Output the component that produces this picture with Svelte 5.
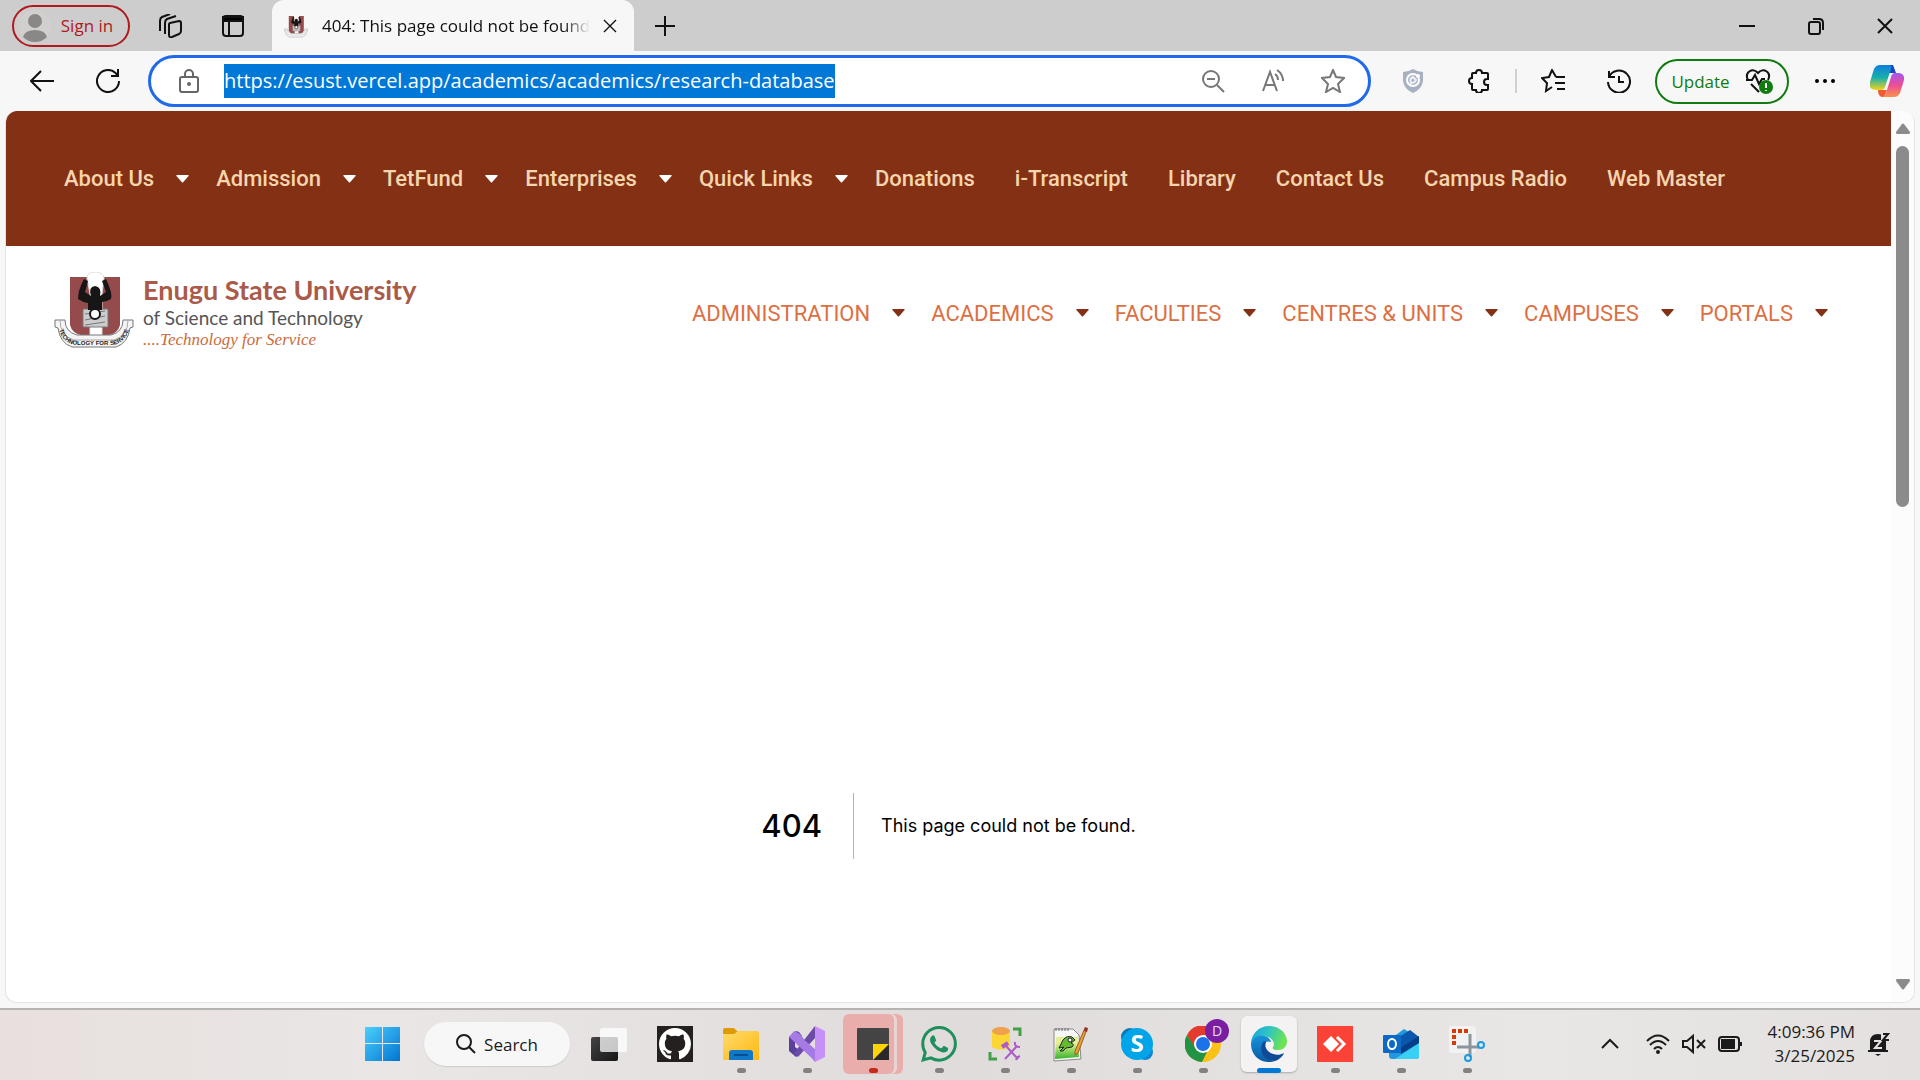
<script lang="ts">
	import { onMount } from 'svelte';

	interface NavItem {
		label: string;
		menu?: boolean;
	}

	interface TaskbarApp {
		id: string;
		name: string;
		state?: 'running' | 'alert' | 'active';
	}

	const topLinks: NavItem[] = [
		{ label: 'About Us', menu: true },
		{ label: 'Admission', menu: true },
		{ label: 'TetFund', menu: true },
		{ label: 'Enterprises', menu: true },
		{ label: 'Quick Links', menu: true },
		{ label: 'Donations' },
		{ label: 'i-Transcript' },
		{ label: 'Library' },
		{ label: 'Contact Us' },
		{ label: 'Campus Radio' },
		{ label: 'Web Master' }
	];

	const mainLinks: NavItem[] = [
		{ label: 'ADMINISTRATION', menu: true },
		{ label: 'ACADEMICS', menu: true },
		{ label: 'FACULTIES', menu: true },
		{ label: 'CENTRES & UNITS', menu: true },
		{ label: 'CAMPUSES', menu: true },
		{ label: 'PORTALS', menu: true }
	];

	const apps: TaskbarApp[] = [
		{ id: 'taskview', name: 'Task view' },
		{ id: 'github', name: 'GitHub' },
		{ id: 'explorer', name: 'File Explorer', state: 'running' },
		{ id: 'vs', name: 'Visual Studio', state: 'running' },
		{ id: 'notes', name: 'Sticky Notes', state: 'alert' },
		{ id: 'whatsapp', name: 'WhatsApp', state: 'running' },
		{ id: 'ssms', name: 'SQL Server Management Studio', state: 'running' },
		{ id: 'notepad', name: 'Notepad++', state: 'running' },
		{ id: 'skype', name: 'Skype', state: 'running' },
		{ id: 'chrome', name: 'Chrome', state: 'running' },
		{ id: 'edge', name: 'Edge', state: 'active' },
		{ id: 'anydesk', name: 'AnyDesk', state: 'running' },
		{ id: 'outlook', name: 'Outlook', state: 'running' },
		{ id: 'snip', name: 'Snipping Tool', state: 'running' }
	];

	let url = $state('https://esust.vercel.app/academics/academics/research-database');
	let address: HTMLInputElement;

	onMount(() => {
		address.focus();
		address.select();
	});
</script>

{#snippet crest(motto: boolean)}
	<svg class="crest" viewBox="0 0 80 76" aria-hidden="true">
		<path d="M16 5h50v48q-2 8-11 10H27q-9-2-11-10z" fill="#954a4b" />
		<path d="M33 6q0-6 8-6t9 6l-2 16v42H36V22z" fill="#fff" stroke="#ddd" />
		<path d="M29 37h25v18H29z" fill="#ccc" stroke="#777" />
		<path d="M31 42l20-3M31 48l20-4M31 53l20-3" stroke="#777" fill="none" />
		<path
			d="M30 7l4 2-3 11 6 4q-3-9 4-10 7 1 5 10l6-4-4-11 4-2q7 15 5 20-5 3-9 3v8H34v-7q-6-1-10-4 0-9 6-20z"
			fill="#171515"
		/>
		<circle cx="41" cy="42" r="5" fill="#fff" stroke="#171515" stroke-width="2" />
		<path
			d="M1 48h10q0 12 12 15h34q12-3 12-15h10v7l-3 1q-2 15-14 19H18Q6 71 4 56l-3-1z"
			fill="#f4f4f4"
			stroke="#777"
		/>
		<path d="M6 48q0 16 14 20h40q14-4 14-20" fill="none" stroke="#aaa" />
		{#if motto}
			<path id="motto-line" d="M5 57Q9 73 25 73h30q16 0 20-16" fill="none" />
			<text class="motto"><textPath href="#motto-line" startOffset="50%">TECHNOLOGY FOR SERVICE</textPath></text>
		{/if}
	</svg>
{/snippet}

{#snippet caret()}
	<svg class="caret" viewBox="0 0 13 8" aria-hidden="true"><path d="M1 0h11q1 0 .6 1L7.3 7q-.8 1-1.6 0L.4 1Q0 0 1 0z" /></svg>
{/snippet}

{#snippet appIcon(id: string)}
	<svg class="app-icon" viewBox="0 0 36 36" aria-hidden="true">
		{#if id === 'taskview'}
			<defs>
				<linearGradient id="tv" y2="1" x2="1"><stop stop-color="#444" /><stop offset="1" stop-color="#161616" /></linearGradient>
			</defs>
			<rect y="11" width="27" height="24" rx="2" fill="url(#tv)" />
			<rect x="9" y="2" width="27" height="24" rx="2" fill="#fff" opacity=".75" />
		{:else if id === 'github'}
			<rect width="36" height="36" fill="#24201f" />
			<path
				transform="translate(2 2) scale(2)"
				fill="#fff"
				d="M8 0C3.58 0 0 3.58 0 8c0 3.54 2.29 6.53 5.47 7.59.4.07.55-.17.55-.38 0-.19-.01-.82-.01-1.49-2.01.37-2.53-.49-2.69-.94-.09-.23-.48-.94-.82-1.13-.28-.15-.68-.52-.01-.53.63-.01 1.08.58 1.23.82.72 1.21 1.87.87 2.33.66.07-.52.28-.87.51-1.07-1.78-.2-3.64-.89-3.64-3.95 0-.87.31-1.59.82-2.15-.08-.2-.36-1.02.08-2.12 0 0 .67-.21 2.2.82.64-.18 1.32-.27 2-.27s1.36.09 2 .27c1.53-1.04 2.2-.82 2.2-.82.44 1.1.16 1.92.08 2.12.51.56.82 1.27.82 2.15 0 3.07-1.87 3.75-3.65 3.95.29.25.54.73.54 1.48 0 1.07-.01 1.93-.01 2.2 0 .21.15.46.55.38A8.01 8.01 0 0 0 16 8c0-4.42-3.58-8-8-8z"
			/>
		{:else if id === 'explorer'}
			<defs>
				<linearGradient id="fe" x2="1" y2="1"><stop stop-color="#ffdb6b" /><stop offset="1" stop-color="#fdb813" /></linearGradient>
			</defs>
			<path d="M0 4q0-2 2-2h9l4 4v4H0z" fill="#dd9c05" />
			<path d="M0 8h11l4-3h19q2 0 2 2v27H0z" fill="url(#fe)" />
			<path d="M6 34v-7q0-3 3-3h18q3 0 3 3v7z" fill="#0f78c8" />
			<path d="M11 29h14" stroke="#06508f" stroke-width="2" />
		{:else if id === 'vs'}
			<path d="M0 11l7-6 3 1 3 4-7 5v6l7 5-6 5-7-6z" fill="#59409a" />
			<path d="M6 5l5 3 17 22-2 6L6 10z" fill="#a177df" />
			<path d="M5 27L26 0v12L9 31z" fill="#6c4ba8" />
			<path d="M5 5l22 19v12L0 11z" fill="#a67ae4" />
			<path d="M26 0l10 5v26l-10 5z" fill="#c690f7" />
		{:else if id === 'notes'}
			<rect x="2" y="2" width="32" height="32" rx="1" fill="#444" />
			<path d="M18 34h16V18z" fill="#292929" />
			<path d="M18 18h16L18 34z" fill="#fdd20b" />
		{:else if id === 'whatsapp'}
			<path
				transform="scale(1.5)"
				fill="#1f8f5d"
				d="M17.472 14.382c-.297-.149-1.758-.867-2.03-.967-.273-.099-.471-.148-.67.15-.197.297-.767.966-.94 1.164-.173.199-.347.223-.644.075-.297-.15-1.255-.463-2.39-1.475-.883-.788-1.48-1.761-1.653-2.059-.173-.297-.018-.458.13-.606.134-.133.298-.347.446-.52.149-.174.198-.298.298-.497.099-.198.05-.371-.025-.52-.075-.149-.669-1.612-.916-2.207-.242-.579-.487-.5-.669-.51-.173-.008-.371-.01-.57-.01-.198 0-.52.074-.792.372-.272.297-1.04 1.016-1.04 2.479 0 1.462 1.065 2.875 1.213 3.074.149.198 2.096 3.2 5.077 4.487.709.306 1.262.489 1.694.625.712.227 1.36.195 1.871.118.571-.085 1.758-.719 2.006-1.413.248-.694.248-1.289.173-1.413-.074-.124-.272-.198-.57-.347m-5.421 7.403h-.004a9.87 9.87 0 01-5.031-1.378l-.361-.214-3.741.982.998-3.648-.235-.374a9.86 9.86 0 01-1.51-5.26c.001-5.45 4.436-9.884 9.888-9.884 2.64 0 5.122 1.03 6.988 2.898a9.825 9.825 0 012.893 6.994c-.003 5.45-4.437 9.884-9.885 9.884m8.413-18.297A11.815 11.815 0 0012.05 0C5.495 0 .16 5.335.157 11.892c0 2.096.547 4.142 1.588 5.945L.057 24l6.305-1.654a11.882 11.882 0 005.683 1.448h.005c6.554 0 11.89-5.335 11.893-11.893a11.821 11.821 0 00-3.48-8.413z"
			/>
		{:else if id === 'ssms'}
			<path d="M5 5v16q8 5 18 0V5z" fill="#fcd634" />
			<ellipse cx="14" cy="5" rx="9" ry="4" fill="#efa04c" />
			<path d="M26 3h7v7M3 26v7h7" fill="none" stroke="#43a047" stroke-width="3" />
			<path d="M18 19l13 14M30 20L18 33" stroke="#ab5cc9" stroke-width="2" />
			<path d="M15 21l6-4" stroke="#ab5cc9" stroke-width="4" />
			<path d="M28 16q-1 5 5 5M29 34q1-3 4-4" fill="none" stroke="#ab5cc9" stroke-width="2" />
		{:else if id === 'notepad'}
			<defs>
				<linearGradient id="np" x2="0" y2="1"><stop offset=".3" stop-color="#e4ef95" /><stop offset="1" stop-color="#35b52a" /></linearGradient>
			</defs>
			<path d="M1 3h19l6 6 2 24-27 2z" fill="#f7f7f7" stroke="#888" />
			<path d="M3 11h22l1 20-24 2z" fill="url(#np)" />
			<path d="M3 5v-3M6 5v-3M9 5v-3M12 5v-3M15 5v-3" stroke="#666" />
			<path d="M6 22l4-8q4-5 9-3l3 3-4 3q4 1 1 4l-6 1-3 3H7l4-4z" fill="#64bb32" stroke="#222" />
			<circle cx="17" cy="14" r="2" fill="#fff" stroke="#222" />
			<path d="M32 2l2 1-9 24-3 2v-4z" fill="#f0a02a" stroke="#946027" />
			<path d="M32 1l3 1-1 4-3-1z" fill="#9c2f2f" />
		{:else if id === 'skype'}
			<circle cx="11" cy="11" r="9" fill="#0775b8" />
			<circle cx="26" cy="26" r="8" fill="#0a86d6" />
			<circle cx="18" cy="18" r="16" fill="#00a4e8" />
			<text class="skype-letter" x="18" y="26">S</text>
		{:else if id === 'chrome'}
			<circle cx="18" cy="18" r="18" fill="#fbc116" />
			<path d="M2 9a18 18 0 0 1 32 0H18l-8 14z" fill="#e33b2e" />
			<path d="M2 9l9 14 11 3-5 10A18 18 0 0 1 2 9z" fill="#229342" />
			<circle cx="18" cy="18" r="9" fill="#fff" />
			<circle cx="18" cy="18" r="7" fill="#1a73e8" />
		{:else if id === 'edge'}
			<defs>
				<linearGradient id="eg" x2="1" y2=".3"><stop stop-color="#1b9de2" /><stop offset=".5" stop-color="#2fc4c4" /><stop offset="1" stop-color="#6be354" /></linearGradient>
				<linearGradient id="eb" x2="0" y2="1"><stop stop-color="#1793da" /><stop offset="1" stop-color="#0c59a4" /></linearGradient>
			</defs>
			<path d="M0 18C0 8 8 0 18 0c11 0 18 8 18 15 0 6-4 9-9 9-4 0-6-1-5-3 2-2 1-8-5-10C9 9 3 12 0 18z" fill="url(#eg)" />
			<path d="M0 18C2 11 7 9 12 10c5 0 8 4 8 6-7-3-10 6-6 12 3 5 8 7 10 7C12 39 0 31 0 18z" fill="url(#eb)" />
			<path d="M13 15c-6 7-2 20 11 20 4-1 8-5 9-8-5 3-12 2-16-2-3-3-3-6-2-9z" fill="#0e4a95" />
		{:else if id === 'anydesk'}
			<rect width="36" height="36" fill="#fb4236" />
			<path d="M6 18l8-8 8 8-8 8z" fill="#fff" />
			<path d="M20 11l7 7-7 7" fill="none" stroke="#fff" stroke-width="3" />
		{:else if id === 'outlook'}
			<path d="M6 14L21 3l15 9v18q0 3-3 3H9q-3 0-3-3z" fill="#2099e0" />
			<path d="M13 13l14-9 9 7-19 13z" fill="#0a58ad" />
			<path d="M36 13v17q0 3-3 3H12L36 17z" fill="#38d0f5" />
			<path d="M17 22l19-12v7L18 28z" fill="#063d88" />
			<rect y="9" width="18" height="18" rx="1" fill="#0d69c4" />
			<ellipse cx="9" cy="18" rx="4" ry="5" fill="none" stroke="#fff" stroke-width="2" />
		{:else if id === 'snip'}
			<rect width="27" height="27" rx="3" fill="#f0f2f4" />
			<path d="M3 5h17M5 9v10" stroke="#d83b01" stroke-width="4" stroke-dasharray="4 2" fill="none" />
			<path d="M21 8v23M8 21h22" stroke="#8d959c" stroke-width="3" />
			<circle cx="32" cy="19" r="3" fill="none" stroke="#189ce2" stroke-width="2" />
			<circle cx="19" cy="32" r="3" fill="none" stroke="#189ce2" stroke-width="2" />
		{/if}
	</svg>
{/snippet}

<div class="screen">
	<header class="tabs">
		<button class="sign-in">
			<svg class="avatar" viewBox="0 0 32 32" aria-hidden="true">
				<circle cx="16" cy="16" r="16" fill="#d2d0ce" />
				<circle cx="16" cy="11" r="7" fill="#8a8886" />
				<path d="M4 27q2-7 12-7t12 7q-5 5-12 5T4 27z" fill="#8a8886" />
			</svg>
			Sign in
		</button>
		<button class="icon workspaces" aria-label="Workspaces">
			<svg viewBox="0 0 24 24">
				<path d="M12 9l9-2q2 0 2 2v8q0 2-2 3l-7 3q-3 1-3-2V11q0-2 1-2z" />
				<path d="M7 20V9q0-3 2-4l9-3M2 17V7q0-3 2-4l8-3" />
			</svg>
		</button>
		<button class="icon tab-actions" aria-label="Tab actions">
			<svg viewBox="0 0 24 24"><rect x="2" y="2" width="20" height="20" rx="3" /><path d="M2 5h20M8 7v15" /><path d="M2 3h20v4H2z" fill="#000" /></svg>
		</button>
		<div class="tab">
			{@render crest(false)}
			<span class="tab-title">404: This page could not be found</span>
			<button class="icon small" aria-label="Close tab"><svg viewBox="0 0 24 24"><path d="M3 3l18 18M21 3L3 21" /></svg></button>
		</div>
		<button class="icon new-tab" aria-label="New tab"><svg viewBox="0 0 24 24"><path d="M12 2v20M2 12h20" /></svg></button>
		<div class="window-buttons">
			<button class="icon" aria-label="Minimize"><svg viewBox="0 0 24 24"><path d="M4 12h16" /></svg></button>
			<button class="icon" aria-label="Restore"><svg viewBox="0 0 24 24"><rect x="5" y="8" width="11" height="12" rx="2" /><path d="M9 5h6q4 0 4 4v7" /></svg></button>
			<button class="icon" aria-label="Close"><svg viewBox="0 0 24 24"><path d="M5 5l14 14M19 5L5 19" /></svg></button>
		</div>
	</header>

	<div class="toolbar">
		<button class="icon back" aria-label="Back"><svg viewBox="0 0 24 24"><path d="M24 12H1M11 2L1 12l10 10" /></svg></button>
		<button class="icon reload" aria-label="Refresh"><svg viewBox="0 0 24 24"><path d="M23 12a11 11 0 1 1-4-8.5l3 3M22 0v7h-7" /></svg></button>
		<div class="address">
			<svg class="lock" viewBox="0 0 24 24" aria-hidden="true"><rect x="3" y="8" width="18" height="15" rx="2" /><path d="M8 8V5a4 4 0 0 1 8 0v3" /><circle cx="12" cy="15" r="1" /></svg>
			<input bind:this={address} bind:value={url} aria-label="Address" spellcheck="false" />
			<button class="icon grey" aria-label="Zoom out"><svg viewBox="0 0 24 24"><circle cx="10" cy="10" r="8" /><path d="M6 10h8M16 16l7 7" /></svg></button>
			<button class="icon grey" aria-label="Read aloud"><svg viewBox="0 0 24 24"><path d="M2 22L9 3l7 19M5 16h8M14 5q3 2 3 6M16 1q6 4 6 11" /></svg></button>
			<button class="icon grey" aria-label="Add to favorites"><svg viewBox="0 0 24 24"><path d="M12 1l3 7 8 1-6 6 2 8-7-4-7 4 2-8-6-6 8-1z" /></svg></button>
		</div>
		<div class="tools">
			<button class="icon" aria-label="Shield extension">
				<svg viewBox="0 0 24 24">
					<path d="M12 0q5 3 10 3v9q-1 8-10 12Q3 20 2 12V3q5 0 10-3z" fill="#a8b1c2" stroke="none" />
					<circle cx="12" cy="11" r="6" stroke="#fff" /><path d="M12 8q-4 2-2 6 4 0 5-3z" stroke="#edf0f7" /><circle cx="17" cy="7" r="1" stroke="#fff" />
				</svg>
			</button>
			<button class="icon" aria-label="Extensions">
				<svg viewBox="0 0 24 24"><path d="M9 4a3 3 0 0 1 6 0h5q1 0 1 1v5h-1a3 3 0 0 0 0 6h1v4q0 1-1 1h-5a3 3 0 0 1-6 0H6q-1 0-1-1v-5a3 3 0 0 1 0-6V5q0-1 1-1z" /></svg>
			</button>
			<span class="divider"></span>
			<button class="icon" aria-label="Favorites"><svg viewBox="0 0 24 24"><path d="M15 8l-4-7-3 7-7 1 5 5-1 8 6-4M15 8h9M14 14h10M16 20h8" /></svg></button>
			<button class="icon" aria-label="History"><svg viewBox="0 0 24 24"><path d="M2 2v6h6M2 8a11 11 0 1 1-1 5M12 7v6h5" /></svg></button>
			<button class="update">
				Update
				<svg viewBox="0 0 28 28" aria-hidden="true">
					<path d="M3 13C-1 5 8 0 13 6c5-6 14-1 10 7M1 13h6l3-5 4 9 3-5h3M6 17l8 8" />
					<circle cx="21" cy="20" r="7" fill="#107c10" stroke="none" />
					<path d="M21 16v5M21 23v1" stroke="#fff" />
				</svg>
			</button>
			<button class="icon" aria-label="Settings and more">
				<svg viewBox="0 0 24 24"><g fill="#000" stroke="none"><circle cx="4" cy="12" r="2" /><circle cx="12" cy="12" r="2" /><circle cx="20" cy="12" r="2" /></g></svg>
			</button>
			<button class="copilot" aria-label="Copilot">
				<svg viewBox="0 0 34 32">
					<defs>
						<linearGradient id="cpa" x2="0" y2="1"><stop stop-color="#127edb" /><stop offset=".5" stop-color="#16afad" /><stop offset="1" stop-color="#f3d31c" /></linearGradient>
						<linearGradient id="cpb" x2="0" y2="1"><stop stop-color="#a357ee" /><stop offset=".5" stop-color="#ed4c97" /><stop offset="1" stop-color="#fa924b" /></linearGradient>
					</defs>
					<path d="M18 0h5l3 8h-8z" fill="#1545c4" />
					<path d="M9 25h8l-3 7h-2q-4-1-4-7z" fill="#f05b35" />
					<path d="M10 0h10q2 1 1 4l-6 18q-1 3-4 3H5q-7-1-5-8L4 4q2-4 6-4z" fill="url(#cpa)" />
					<path d="M25 8h4q6 1 5 7l-4 13q-2 4-6 4H12q3-1 4-4l5-16q1-4 4-4z" fill="url(#cpb)" />
				</svg>
			</button>
		</div>
	</div>

	<div class="viewport">
		<div class="page">
			<nav class="top-nav" aria-label="Site">
				{#each topLinks as link (link.label)}
					<a href="#top" class:has-menu={link.menu}>
						{link.label}
						{#if link.menu}{@render caret()}{/if}
					</a>
				{/each}
			</nav>
			<div class="masthead">
				<a class="brand" href="#home">
					{@render crest(true)}
					<span class="brand-text">
						<span class="brand-name">Enugu State University</span>
						<span class="brand-sub">of Science and Technology</span>
						<span class="brand-motto">....Technology for Service</span>
					</span>
				</a>
				<nav class="main-nav" aria-label="Main">
					{#each mainLinks as link (link.label)}
						<a href="#main">{link.label}{@render caret()}</a>
					{/each}
				</nav>
			</div>
			<main class="error">
				<h1>404</h1>
				<h2>This page could not be found.</h2>
			</main>
		</div>
		<div class="scrollbar" aria-hidden="true">
			<svg viewBox="0 0 14 11"><path d="M6 1q1-1 2 0l6 8q0 2-1 2H1Q0 11 0 9z" /></svg>
			<div class="track"><div class="thumb"></div></div>
			<svg viewBox="0 0 14 11"><path d="M6 10q1 1 2 0l6-8q0-2-1-2H1Q0 0 0 2z" /></svg>
		</div>
	</div>

	<footer class="taskbar">
		<div class="launcher">
			<button class="app" aria-label="Start">
				<svg class="app-icon" viewBox="0 0 36 36">
					<defs>
						<linearGradient id="win" gradientUnits="userSpaceOnUse" x1="0" y1="0" x2="36" y2="36"><stop stop-color="#4dd0fe" /><stop offset="1" stop-color="#0072d0" /></linearGradient>
					</defs>
					<path d="M0 1h17v16H0zM18 1h17v16H18zM0 18h17v17H0zM18 18h17v17H18z" fill="url(#win)" />
				</svg>
			</button>
			<button class="search">
				<svg viewBox="0 0 20 20" aria-hidden="true"><circle cx="8" cy="8" r="7" /><path d="M13 13l6 6" /></svg>
				Search
			</button>
			{#each apps as app (app.id)}
				<button class="app {app.state ?? ''}" aria-label={app.name}>
					<span class="tile">{@render appIcon(app.id)}</span>
					{#if app.id === 'chrome'}<span class="profile">D</span>{/if}
				</button>
			{/each}
		</div>
		<div class="tray">
			<svg class="chevron" viewBox="0 0 24 24"><path d="M4 16l8-8 8 8" /></svg>
			<svg viewBox="0 0 24 24"><path d="M1 9q11-11 22 0M4 13q8-8 16 0M8 17q4-4 8 0" /><circle cx="12" cy="20" r="1" /></svg>
			<svg viewBox="0 0 24 24"><path d="M1 9h4l6-5v16l-6-5H1zM15 8l8 8M23 8l-8 8" /></svg>
			<svg viewBox="0 0 24 24"><rect x="1" y="5" width="20" height="14" rx="3" /><path d="M4 8h12v8H4z" fill="#1b1b1b" /><path d="M23 10v4" /></svg>
			<div class="clock">
				<time>4:09:36 PM</time>
				<time datetime="2025-03-25">3/25/2025</time>
			</div>
			<svg class="bell" viewBox="0 0 24 24">
				<path d="M4 18v-8q0-8 8-8t8 8v8l2 2H2zM9 22h6l-3 2z" fill="#1b1b1b" stroke="none" />
				<path d="M2 19h20" />
				<path d="M15 0h9v9h-9z" fill="#e5e2e1" stroke="none" />
				<path d="M8 9h7l-6 7h7" stroke="#e5e2e1" />
				<path d="M17 2h5l-5 6h6" />
			</svg>
		</div>
	</footer>
</div>

<style>
	:global(body) {
		margin: 0;
		background: #f7f7f7;
	}

	.screen {
		display: flex;
		flex-direction: column;
		min-height: 100vh;
		font-family: 'Open Sans', 'Noto Sans', sans-serif;
		font-size: 18px;
		color: #1b1b1b;
	}

	button {
		display: flex;
		align-items: center;
		justify-content: center;
		padding: 0;
		border: 0;
		background: none;
		color: inherit;
		font: inherit;
	}

	a {
		color: inherit;
		text-decoration: none;
	}

	svg {
		flex: none;
	}

	.icon svg {
		width: 24px;
		height: 24px;
		fill: none;
		stroke: #111;
		stroke-width: 2;
	}

	.icon.small svg {
		width: 16px;
		height: 16px;
	}

	.icon.grey svg {
		stroke: #777;
	}

	.tabs {
		display: flex;
		align-items: center;
		height: 51px;
		padding-left: 12px;
		background: #cdcdcd;
	}

	.sign-in {
		gap: 10px;
		box-sizing: border-box;
		width: 118px;
		height: 42px;
		padding-right: 10px;
		border: 2px solid #b0191e;
		border-radius: 21px;
		color: #b0191e;
		font-size: 17px;
		white-space: nowrap;
	}

	.avatar {
		width: 32px;
		height: 32px;
	}

	.workspaces {
		margin-left: 28px;
	}

	.tab-actions {
		margin-left: 39px;
	}

	.tab {
		display: flex;
		align-items: center;
		box-sizing: border-box;
		width: 362px;
		height: 51px;
		margin-left: 27px;
		padding: 0 16px 0 12px;
		border-radius: 12px 12px 0 0;
		background: #f7f7f7;
	}

	.tab .crest {
		width: 24px;
		height: 24px;
	}

	.tab-title {
		flex: 1;
		margin: 0 12px 0 14px;
		overflow: hidden;
		color: #111;
		font-size: 17px;
		white-space: nowrap;
		mask-image: linear-gradient(to right, #000 90%, transparent);
	}

	.new-tab {
		margin-left: 19px;
	}

	.window-buttons {
		display: flex;
		gap: 45px;
		margin-left: auto;
		padding-right: 23px;
	}

	.toolbar {
		display: flex;
		align-items: center;
		height: 60px;
		padding-right: 16px;
	}

	.back {
		margin-left: 30px;
	}

	.reload {
		margin: 0 28px 0 42px;
	}

	.address {
		display: flex;
		flex: 1;
		align-items: center;
		box-sizing: border-box;
		height: 52px;
		padding: 0 23px 0 26px;
		border: 3px solid #2169eb;
		border-radius: 26px;
		background: #fff;
	}

	.address .grey {
		margin-left: 36px;
	}

	.lock {
		width: 24px;
		height: 24px;
		fill: none;
		stroke: #666;
		stroke-width: 2;
	}

	input {
		flex: 1;
		min-width: 0;
		height: 34px;
		margin-left: 23px;
		padding: 0;
		border: 0;
		outline: 0;
		background: none;
		font-family: 'Open Sans', 'Noto Sans', sans-serif;
		font-size: 20px;
		line-height: 34px;
	}

	input::selection {
		background: #0078d7;
		color: #fff;
	}

	.tools {
		display: flex;
		align-items: center;
		margin-left: 30px;
	}

	.tools .icon {
		margin-right: 42px;
	}

	.divider {
		width: 2px;
		height: 24px;
		margin: 0 24px 0 -18px;
		background: #d0d0d0;
	}

	.tools .update {
		gap: 15px;
		box-sizing: border-box;
		width: 134px;
		height: 45px;
		margin: 0 24px 0 -18px;
		border: 2px solid #107c10;
		border-radius: 23px;
		color: #107c10;
		font-size: 17px;
	}

	.update svg {
		width: 28px;
		height: 28px;
		fill: none;
		stroke: #111;
		stroke-width: 2;
	}

	.copilot {
		margin-left: -9px;
	}

	.copilot svg {
		width: 34px;
		height: 32px;
	}

	.viewport {
		display: flex;
		flex: 1;
		margin: 0 5px 5px;
		border: 1px solid #e3e3e3;
		border-top: 0;
		border-radius: 12px;
		background: #fff;
		overflow: hidden;
	}

	.page {
		display: flex;
		flex: 1;
		flex-direction: column;
		font-family: Roboto, sans-serif;
	}

	.top-nav {
		display: flex;
		align-items: center;
		gap: 40px;
		height: 135px;
		padding-left: 58px;
		background: #843014;
		color: #f5d5ad;
		font-size: 22px;
		font-weight: 500;
		white-space: nowrap;
	}

	.top-nav a,
	.main-nav a {
		display: flex;
		align-items: center;
		gap: 22px;
	}

	.top-nav .has-menu {
		margin-right: -13px;
	}

	.caret {
		width: 13px;
		height: 8px;
		fill: #843014;
	}

	.top-nav .caret {
		fill: #fff;
	}

	.masthead {
		display: flex;
		align-items: center;
		justify-content: space-between;
		height: 134px;
		padding: 0 63px 0 48px;
	}

	.brand {
		display: flex;
		gap: 9px;
		margin-bottom: 4px;
	}

	.brand .crest {
		width: 80px;
		height: 76px;
	}

	.motto {
		fill: #222;
		font-family: 'Liberation Sans', sans-serif;
		font-size: 6px;
		font-weight: 700;
		text-anchor: middle;
	}

	.brand-text {
		display: flex;
		flex-direction: column;
		padding-top: 2px;
		font-family: Lato, sans-serif;
		line-height: 24px;
		white-space: nowrap;
	}

	.brand-name {
		color: #aa5a49;
		font-size: 27px;
		font-weight: 700;
		line-height: 32px;
	}

	.brand-sub {
		color: #555;
		font-size: 19px;
	}

	.brand-motto {
		color: #cc6b39;
		font-family: 'Liberation Serif', serif;
		font-size: 17px;
		font-style: italic;
		line-height: 20px;
	}

	.main-nav {
		display: flex;
		gap: 26px;
		color: #dc6f43;
		font-size: 22px;
		white-space: nowrap;
	}

	.error {
		display: flex;
		flex: 1;
		align-items: center;
		justify-content: center;
		padding-top: 269px;
		color: #000;
		font-family: Inter, sans-serif;
	}

	.error h1 {
		margin: 0 27px 0 0;
		padding-right: 31px;
		border-right: 1px solid #b3b3b3;
		font-size: 31px;
		font-weight: 500;
		line-height: 66px;
	}

	.error h2 {
		margin: 0;
		font-size: 18px;
		font-weight: 400;
	}

	.scrollbar {
		display: flex;
		flex-direction: column;
		align-items: center;
		gap: 12px;
		width: 23px;
		padding: 12px 0;
		background: #fcfcfc;
	}

	.scrollbar svg {
		width: 14px;
		height: 11px;
		fill: #8b8b8b;
	}

	.track {
		flex: 1;
		width: 13px;
	}

	.thumb {
		height: 44%;
		border-radius: 7px;
		background: #8b8b8b;
	}

	.taskbar {
		display: grid;
		grid-template-columns: 350fr auto 420fr;
		box-sizing: border-box;
		height: 72px;
		padding-bottom: 2px;
		border-top: 2px solid #b6b3b3;
		background: linear-gradient(to right, #e8e0de, #e9e6e5 20%, #dfdcdb 50%, #e9e7e6 80%, #e3e0df);
	}

	.launcher {
		display: flex;
		grid-column: 2;
		align-items: center;
	}

	.app {
		position: relative;
		width: 66px;
		height: 68px;
	}

	.app-icon {
		display: block;
		width: 36px;
		height: 36px;
	}

	.tile {
		padding: 10px;
		border-radius: 6px;
	}

	.active .tile {
		background: #f4f2f2;
		box-shadow: 0 1px 2px #aaa;
	}

	/* the second shadow is the edge of a stacked window behind the tile */
	.alert .tile {
		margin-right: 9px;
		padding: 12px 3px 12px 12px;
		background: #e9aeab;
		box-shadow: 3px 0 #e6d5d3, 9px 0 #e9aeab;
	}

	.running::after,
	.alert::after,
	.active::after {
		content: '';
		position: absolute;
		bottom: 5px;
		width: 9px;
		height: 5px;
		border-radius: 3px;
		background: #85817f;
	}

	.alert::after {
		background: #c42b1c;
	}

	.active::after {
		width: 24px;
		background: #0078d4;
	}

	.profile {
		position: absolute;
		top: 9px;
		right: 7px;
		width: 24px;
		border-radius: 50%;
		background: #7b1fa2;
		color: #eadcf2;
		font-size: 14px;
		line-height: 24px;
	}

	.skype-letter {
		fill: #fff;
		font-size: 24px;
		font-weight: 700;
		text-anchor: middle;
	}

	.search {
		gap: 8px;
		width: 146px;
		height: 44px;
		margin: 0 6px 0 8px;
		border-radius: 22px;
		background: #f8f7f7;
		box-shadow: 0 1px 1px #ccc;
		font-size: 17px;
	}

	.search svg {
		width: 20px;
		height: 20px;
		fill: none;
		stroke: #1b1b1b;
		stroke-width: 2;
	}

	.tray {
		display: flex;
		align-items: center;
		justify-content: flex-end;
		padding-right: 30px;
	}

	.tray svg {
		width: 24px;
		height: 24px;
		margin-right: 12px;
		fill: none;
		stroke: #1b1b1b;
		stroke-width: 2;
	}

	.tray .chevron {
		margin-right: 24px;
	}

	.tray .bell {
		margin: 0 0 0 11px;
	}

	.clock {
		display: flex;
		flex-direction: column;
		margin-left: 14px;
		font-size: 17px;
		line-height: 24px;
		text-align: right;
		white-space: nowrap;
	}
</style>
